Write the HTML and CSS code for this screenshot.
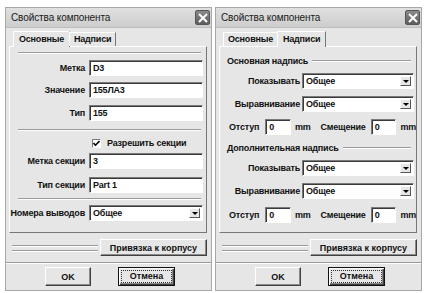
FILE: index.html
```html
<!DOCTYPE html>
<html lang="ru">

<head>
    <meta charset="UTF-8">
    <title>Свойства компонента</title>
    <link rel="stylesheet" href="styles.css">
</head>

<body>
    <div class="screen">

        <!-- вкладка "Основные" -->
        <div class="dialog">
            <div class="titlebar">
                <span class="title">Свойства компонента</span>
                <span class="close">
                    <svg width="10" height="10" viewBox="0 0 10 10"><path d="M1 1L9 9M9 1L1 9" stroke="#fff" stroke-width="2"/></svg>
                </span>
            </div>
            <div class="tabs">
                <span class="tab on">Основные</span>
                <span class="tab">Надписи</span>
            </div>
            <div class="panel main">
                <div class="sep first"></div>
                <div class="row r1"><label>Метка</label><span class="field">D3</span></div>
                <div class="row r2"><label>Значение</label><span class="field">155ЛА3</span></div>
                <div class="row r3"><label>Тип</label><span class="field">155</span></div>
                <div class="sep s2"></div>
                <div class="row check-row"><span></span><span class="check-wrap"><span class="check"><svg width="7" height="7" viewBox="0 0 7 7"><path d="M0.5 3L2.5 5.2L6.5 1" stroke="#000" stroke-width="1.6" fill="none"/></svg></span>Разрешить секции</span></div>
                <div class="row r4"><label>Метка секции</label><span class="field">3</span></div>
                <div class="row r5"><label>Тип секции</label><span class="field">Part 1</span></div>
                <div class="sep s3"></div>
                <div class="row r6"><label>Номера выводов</label><span class="field select">Общее<i class="arrow"></i></span></div>
            </div>
            <div class="bind">
                <div class="etch"></div>
                <button class="btn btn-bind">Привязка к корпусу</button>
            </div>
            <div class="actions">
                <button class="btn btn-ok">OK</button>
                <button class="btn btn-cancel default"><span>Отмена</span></button>
            </div>
        </div>

        <!-- вкладка "Надписи" -->
        <div class="dialog right">
            <div class="titlebar">
                <span class="title">Свойства компонента</span>
                <span class="close">
                    <svg width="10" height="10" viewBox="0 0 10 10"><path d="M1 1L9 9M9 1L1 9" stroke="#fff" stroke-width="2"/></svg>
                </span>
            </div>
            <div class="tabs">
                <span class="tab">Основные</span>
                <span class="tab on">Надписи</span>
            </div>
            <div class="panel labels">
                <div class="group g1"><span>Основная надпись</span></div>
                <div class="row q1"><label>Показывать</label><span class="field select">Общее<i class="arrow"></i></span></div>
                <div class="row q2"><label>Выравнивание</label><span class="field select">Общее<i class="arrow"></i></span></div>
                <div class="offset q3">
                    <label>Отступ</label><span class="field small">0</span><span class="unit">mm</span>
                    <label class="shift">Смещение</label><span class="field small">0</span><span class="unit">mm</span>
                </div>
                <div class="group g2"><span>Дополнительная надпись</span></div>
                <div class="row q4"><label>Показывать</label><span class="field select">Общее<i class="arrow"></i></span></div>
                <div class="row q5"><label>Выравнивание</label><span class="field select">Общее<i class="arrow"></i></span></div>
                <div class="offset q6">
                    <label>Отступ</label><span class="field small">0</span><span class="unit">mm</span>
                    <label class="shift">Смещение</label><span class="field small">0</span><span class="unit">mm</span>
                </div>
            </div>
            <div class="bind">
                <div class="etch"></div>
                <button class="btn btn-bind">Привязка к корпусу</button>
            </div>
            <div class="actions">
                <button class="btn btn-ok">OK</button>
                <button class="btn btn-cancel default"><span>Отмена</span></button>
            </div>
        </div>

    </div>
</body>

</html>
```

FILE: styles.css
```css
body {
    margin: 0;
    background: #fff;
    font-family: "Liberation Sans", Arial, sans-serif;
    font-size: 9px;
    font-weight: bold;
    letter-spacing: -0.2px;
    color: #111;
}

.screen {
    display: flex;
    gap: 3px;
    padding: 7px 0 0 5px;
}

/* окно */
.dialog {
    width: 207px;
    height: 284px;
    box-sizing: border-box;
    background: #e6e6e6;
    border: 1px solid #a8a8a8;
    display: flex;
    flex-direction: column;
}

.titlebar {
    height: 19px;
    display: flex;
    align-items: center;
    justify-content: space-between;
    padding: 0 1px 0 5px;
    background: linear-gradient(#e0e0e0, #cdcdcd);
    border-bottom: 1px solid #bdbdbd;
}

.title {
    font-weight: normal;
    font-size: 10px;
    letter-spacing: -0.1px;
    color: #1a1a1a;
}

.close {
    width: 15px;
    height: 15px;
    display: flex;
    align-items: center;
    justify-content: center;
    background: linear-gradient(#8a8a8a, #5e5e5e);
    border: 1px solid #555;
    border-radius: 2px;
    box-sizing: border-box;
}

/* вкладки */
.tabs {
    display: flex;
    align-items: flex-end;
    height: 15px;
    margin: 3px 0 0 7px;
    position: relative;
    z-index: 1;
}

.tab {
    height: 13px;
    line-height: 13px;
    padding: 0 4px;
    border: 1px solid #fff;
    border-right-color: #777;
    border-bottom: none;
    background: #e6e6e6;
}

.tab.on {
    height: 15px;
    line-height: 14px;
    margin-bottom: -1px;
    padding: 0 5px;
}

.tab + .tab {
    margin-left: -1px;
}

.panel {
    margin: 0 4px 0 3px;
    height: 187px;
    box-sizing: border-box;
    border: 1px solid;
    border-color: #fff #777 #777 #fff;
    display: flex;
    flex-direction: column;
}

/* строки с полями */
.row {
    display: grid;
    grid-template-columns: 75px 114px;
    column-gap: 4px;
    align-items: center;
}

.row label {
    text-align: right;
    white-space: nowrap;
}

.field {
    height: 16px;
    box-sizing: border-box;
    background: #fff;
    border: 1px solid;
    border-color: #7a7a7a #fff #fff #7a7a7a;
    box-shadow: inset 1px 1px 0 #3a3a3a;
    padding: 0 3px;
    line-height: 14px;
    position: relative;
}

.select .arrow {
    position: absolute;
    right: 2px;
    top: 2px;
    width: 11px;
    height: 10px;
    box-sizing: border-box;
    background: #e6e6e6;
    border: 1px solid;
    border-color: #fff #555 #555 #fff;
}

.select .arrow::after {
    content: "";
    position: absolute;
    left: 2px;
    top: 3px;
    border-top: 3px solid #000;
    border-left: 3px solid transparent;
    border-right: 3px solid transparent;
}

.sep {
    height: 0;
    border-top: 1px solid #9a9a9a;
    border-bottom: 1px solid #fff;
    margin: 0 5px 0 8px;
}

.sep.first { margin-top: 5px; }
.r1 { margin-top: 6px; }
.r2 { margin-top: 6px; }
.r3 { margin-top: 7px; }
.sep.s2 { margin-top: 8px; }
.check-row { margin-top: 7px; height: 10px; }
.r4 { margin-top: 5px; }
.r5 { margin-top: 8px; }
.sep.s3 { margin-top: 5px; }
.r6 { margin-top: 5px; }

.check-wrap {
    display: flex;
    align-items: center;
    gap: 6px;
    margin-left: 3px;
}

.check {
    width: 9px;
    height: 9px;
    box-sizing: border-box;
    background: #fff;
    border: 1px solid;
    border-color: #7a7a7a #fff #fff #7a7a7a;
    display: flex;
    align-items: center;
    justify-content: center;
}

/* группы на вкладке "Надписи" */
.labels .row {
    grid-template-columns: 80px 112px;
    column-gap: 2px;
}

.group {
    display: flex;
    align-items: center;
    gap: 4px;
    height: 12px;
    margin: 0 5px 0 7px;
}

.group::after {
    content: "";
    flex: 1;
    border-top: 1px solid #9a9a9a;
    border-bottom: 1px solid #fff;
}

.g1 { margin-top: 8px; }
.q1 { margin-top: 6px; }
.q2 { margin-top: 7px; }
.q3 { margin-top: 7px; }
.g2 { margin-top: 7px; }
.q4 { margin-top: 6px; }
.q5 { margin-top: 7px; }
.q6 { margin-top: 8px; }

.offset {
    display: flex;
    align-items: center;
    padding-left: 9px;
}

.offset .small {
    width: 29px;
    margin-left: 6px;
}

.unit {
    margin-left: 4px;
}

.offset .shift {
    margin-left: 10px;
}

.offset .shift + .small {
    margin-left: 5px;
}

/* нижняя часть окна */
.bind {
    display: flex;
    align-items: center;
    height: 29px;
    padding: 0 4px 0 6px;
    border-bottom: 1px solid #9a9a9a;
    box-shadow: 0 1px 0 #fff;
}

.etch {
    flex: 1;
    height: 4px;
    border-top: 1px solid #9a9a9a;
    border-bottom: 1px solid #9a9a9a;
    box-shadow: 0 1px 0 #fff, inset 0 1px 0 #fff;
    margin-right: 2px;
}

button {
    font: inherit;
    color: inherit;
    cursor: pointer;
}

.btn {
    height: 17px;
    padding: 0;
    background: #e6e6e6;
    border: 1px solid;
    border-color: #fff #404040 #404040 #fff;
    box-shadow: inset -1px -1px 0 #8a8a8a;
}

.btn-bind {
    width: 107px;
}

.actions {
    display: flex;
    margin-top: 4px;
    padding-left: 39px;
    gap: 27px;
}

.btn-ok {
    width: 46px;
    height: 19px;
}

.btn-cancel {
    width: 57px;
    height: 19px;
}

.btn.default {
    border: 1px solid #111;
    box-shadow: inset 1px 1px 0 #fff, inset -1px -1px 0 #404040, inset -2px -2px 0 #8a8a8a;
}

.btn.default span {
    display: block;
    margin: 2px;
    border: 1px dotted #333;
    line-height: 11px;
}
```
